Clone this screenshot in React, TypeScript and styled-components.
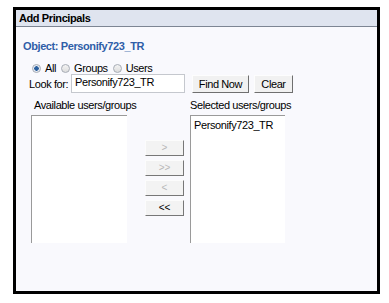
import styled, {createGlobalStyle} from 'styled-components';

const GlobalStyle = createGlobalStyle`
  body {
    margin: 0;
    background: #ffffff;
    font-family: "Liberation Sans", Arial, sans-serif;
    font-size: 11px;
    letter-spacing: -0.4px;
    color: #000;
    white-space: nowrap;
  }
`;

const Page = styled.div`
  width: 389px;
  height: 303px;
  padding: 7px 0 0 13px;
  box-sizing: border-box;
`;

const Dialog = styled.div`
  width: 367px;
  height: 287px;
  box-sizing: border-box;
  border: 3px solid #000;
  background: #f9f9fd;
  display: flex;
  flex-direction: column;
`;

const TitleBar = styled.div`
  height: 16px;
  background: #dfe4ef;
  border-bottom: 1px solid #7d8593;
  font-weight: bold;
  font-size: 11px;
  line-height: 16px;
  padding-left: 3px;
`;

const Body = styled.div`
  padding: 13px 0 0 7px;
  display: flex;
  flex-direction: column;
`;

const ObjectLabel = styled.div`
  color: #2f5ea8;
  font-weight: bold;
  font-size: 11px;
  line-height: 12px;
`;

const RadioRow = styled.div`
  display: flex;
  align-items: center;
  margin: 10px 0 0 9px;
  height: 12px;
`;

const RadioDot = styled.span<{$checked?: boolean}>`
  width: 9px;
  height: 9px;
  flex: none;
  border-radius: 50%;
  box-sizing: border-box;
  border: 1px solid #a7acb5;
  background: ${p =>
    p.$checked
      ? 'radial-gradient(circle, #2b5f9e 0 2px, #e6ebf2 2.5px)'
      : 'linear-gradient(#f4f4f4, #dcdcdc)'};
`;

const RadioText = styled.span`
  margin: 0 5px 0 4px;
`;

const LookRow = styled.div`
  display: flex;
  align-items: center;
  margin: 0 0 0 6px;
  height: 19px;
`;

const LookLabel = styled.span`
  width: 42px;
`;

const TextInput = styled.div`
  width: 114px;
  height: 19px;
  box-sizing: border-box;
  border: 1px solid #c5c8ce;
  background: #fff;
  padding: 1px 0 0 3px;
  line-height: 13px;
`;

const Button = styled.div<{$w: number; $gap: number}>`
  width: ${p => p.$w}px;
  height: 18px;
  box-sizing: border-box;
  background: #f1f1f1;
  border: 1px solid #fdfdfd;
  border-right-color: #6f6f6f;
  border-bottom-color: #6f6f6f;
  text-align: center;
  line-height: 16px;
  margin-left: ${p => p.$gap}px;
`;

const Lists = styled.div`
  display: grid;
  grid-template-columns: 96px 63px 95px;
  margin: 6px 0 0 8px;
`;

const ColHead = styled.div<{$indent: number}>`
  padding-left: ${p => p.$indent}px;
  line-height: 12px;
  height: 12px;
  margin-bottom: 4px;
`;

const ListBox = styled.div`
  height: 128px;
  box-sizing: border-box;
  background: #fff;
  border-left: 1px solid #9a9a9a;
  border-top: 1px solid #9a9a9a;
  padding: 3px 0 0 3px;
  line-height: 13px;
`;

const Movers = styled.div`
  display: flex;
  flex-direction: column;
  gap: 4px;
  padding: 25px 0 0 18px;
`;

const MoveButton = styled.div<{$disabled?: boolean}>`
  width: 39px;
  height: 16px;
  box-sizing: border-box;
  background: #f3f3f3;
  border: 1px solid #fcfcfc;
  border-right-color: #777;
  border-bottom-color: #777;
  color: ${p => (p.$disabled ? '#b8b8b8' : '#000')};
  text-align: center;
  line-height: 14px;
  font-size: 10px;
  letter-spacing: 0;
`;

export default function App() {
  return (
    <>
      <GlobalStyle />
      <Page>
        <Dialog>
          <TitleBar>Add Principals</TitleBar>
          <Body>
            <ObjectLabel>Object: Personify723_TR</ObjectLabel>
            <RadioRow>
              <RadioDot $checked />
              <RadioText>All</RadioText>
              <RadioDot />
              <RadioText>Groups</RadioText>
              <RadioDot />
              <RadioText>Users</RadioText>
            </RadioRow>
            <LookRow>
              <LookLabel>Look for:</LookLabel>
              <TextInput>Personify723_TR</TextInput>
              <Button $w={57} $gap={7}>Find Now</Button>
              <Button $w={39} $gap={5}>Clear</Button>
            </LookRow>
            <Lists>
              <div>
                <ColHead $indent={3}>Available users/groups</ColHead>
                <ListBox />
              </div>
              <div>
                <ColHead $indent={0} />
                <Movers>
                  <MoveButton $disabled>&gt;</MoveButton>
                  <MoveButton $disabled>&gt;&gt;</MoveButton>
                  <MoveButton $disabled>&lt;</MoveButton>
                  <MoveButton>&lt;&lt;</MoveButton>
                </Movers>
              </div>
              <div>
                <ColHead $indent={0}>Selected users/groups</ColHead>
                <ListBox>Personify723_TR</ListBox>
              </div>
            </Lists>
          </Body>
        </Dialog>
      </Page>
    </>
  );
}
